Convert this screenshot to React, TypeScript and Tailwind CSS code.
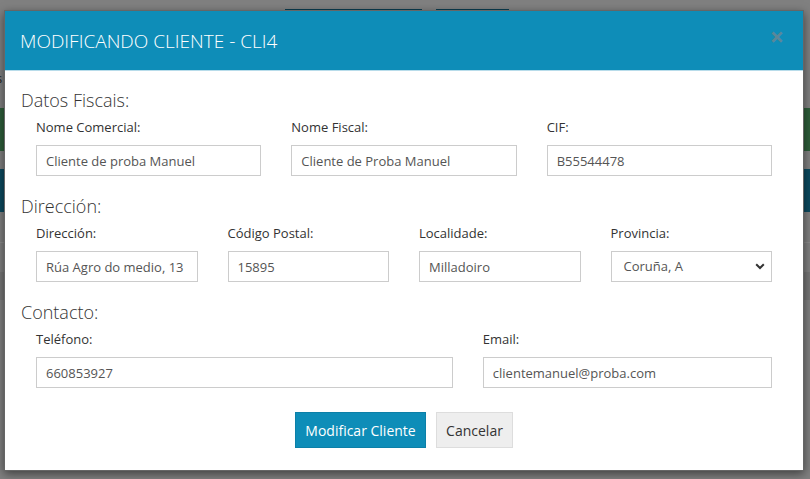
import React from 'react';

const font = { fontFamily: '"Open Sans", "Liberation Sans", sans-serif' };

interface FieldProps {
  label: string;
  value: string;
  span?: string;
}

const Field: React.FC<FieldProps> = ({ label, value, span = '' }) => (
  <div className={`flex flex-col ${span}`}>
    <label className="text-[13px] leading-[18px] text-[#333] mt-[5px]">{label}</label>
    <input
      readOnly
      value={value}
      className="mt-[9px] h-[31px] w-full border border-[#ccc] bg-white px-[9px] text-[13px] text-[#555] outline-none"
      style={font}
    />
  </div>
);

const SelectField: React.FC<FieldProps> = ({ label, value }) => (
  <div className="flex flex-col">
    <label className="text-[13px] leading-[18px] text-[#333] mt-[5px]">{label}</label>
    <div className="mt-[9px] h-[31px] w-full border border-[#ccc] bg-white pl-[12px] pr-[6px] flex items-center justify-between text-[13px] text-[#555]">
      <span>{value}</span>
      <svg width="10" height="7" viewBox="0 0 10 7">
        <path d="M1.2 1.3 L5 5 L8.8 1.3" fill="none" stroke="#333" strokeWidth="2" />
      </svg>
    </div>
  </div>
);

const Heading: React.FC<{ text: string; first?: boolean }> = ({ text, first }) => (
  <h3 className={`text-[18px] leading-[26px] font-light text-[#333] ${first ? '' : 'mt-[17px]'}`}>{text}</h3>
);

export default function App() {
  return (
    <div className="relative w-[810px] h-[479px] overflow-hidden bg-[#808080]" style={font}>
      {/* page behind the backdrop */}
      <div className="flex flex-col w-full">
        <div className="h-[10px] flex">
          <div className="ml-[285px] mt-[9px] h-[1px] w-[137px] bg-[#0b3d50]" />
          <div className="ml-[14px] mt-[9px] h-[1px] w-[73px] bg-[#0b3d50]" />
        </div>
        <div className="mt-[62px] h-[12px] text-[13px] leading-[12px] text-[#222] -ml-[4px]">s</div>
        <div className="mt-[24px] h-[43px] bg-[#2e5e3a]" />
        <div className="mt-[18px] h-[43px] bg-[#0c4a5f]" />
        <div className="mt-[30px] h-[1px] bg-[#8c8c8c]" />
        <div className="mt-[29px] h-[28px] bg-[#767676]" />
      </div>

      {/* modal */}
      <div className="absolute left-[4px] top-[10px] w-[800px] border border-[#666] bg-white shadow-[0_3px_9px_rgba(0,0,0,0.5)]">
        <div className="h-[60px] bg-[#0e8db8] border-b border-[#b8dcea] px-[15px] flex items-center justify-between">
          <h2 className="text-[19px] font-light text-white mt-[2px]">MODIFICANDO CLIENTE - CLI4</h2>
          <span className="text-[25px] font-bold leading-none text-[#5a8799] mr-[4px] -mt-[8px]">×</span>
        </div>

        <div className="pt-[16px] pb-[22px] pl-[16px] pr-[16px]">
          <Heading text="Datos Fiscais:" first />
          <div className="px-[15px] grid grid-cols-3 gap-x-[30px]">
            <Field label="Nome Comercial:" value="Cliente de proba Manuel" />
            <Field label="Nome Fiscal:" value="Cliente de Proba Manuel" />
            <Field label="CIF:" value="B55544478" />
          </div>

          <Heading text="Dirección:" />
          <div className="px-[15px] grid grid-cols-4 gap-x-[30px]">
            <Field label="Dirección:" value="Rúa Agro do medio, 13" />
            <Field label="Código Postal:" value="15895" />
            <Field label="Localidade:" value="Milladoiro" />
            <SelectField label="Provincia:" value="Coruña, A" />
          </div>

          <Heading text="Contacto:" />
          <div className="px-[15px] grid grid-cols-12 gap-x-[30px]">
            <Field label="Teléfono:" value="660853927" span="col-span-7" />
            <Field label="Email:" value="clientemanuel@proba.com" span="col-span-5" />
          </div>

          <div className="mt-[24px] flex justify-center gap-[10px]">
            <button className="h-[36px] w-[131px] bg-[#0e8db8] border border-[#0c80a8] text-white text-[14px]">
              Modificar Cliente
            </button>
            <button className="h-[36px] w-[77px] bg-[#eee] border border-[#ddd] text-[#333] text-[14px]">
              Cancelar
            </button>
          </div>
        </div>
      </div>
    </div>
  );
}
